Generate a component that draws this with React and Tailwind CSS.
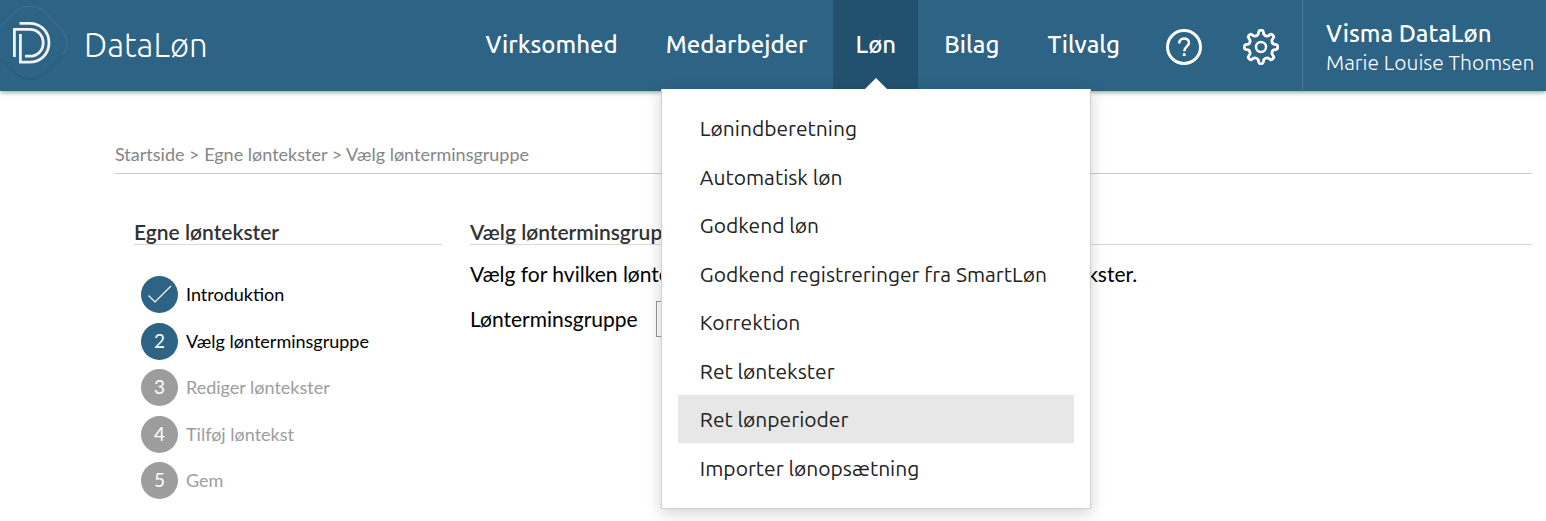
const navItems = ["Virksomhed", "Medarbejder", "Løn", "Bilag", "Tilvalg"];

const menuItems = [
  "Lønindberetning",
  "Automatisk løn",
  "Godkend løn",
  "Godkend registreringer fra SmartLøn",
  "Korrektion",
  "Ret løntekster",
  "Ret lønperioder",
  "Importer lønopsætning",
];

const steps = [
  { label: "Introduktion", state: "done" },
  { label: "Vælg lønterminsgruppe", state: "current" },
  { label: "Rediger løntekster", state: "todo" },
  { label: "Tilføj løntekst", state: "todo" },
  { label: "Gem", state: "todo" },
];

const crumbs = ["Startside", "Egne løntekster", "Vælg lønterminsgruppe"];

function Logo() {
  return (
    <svg viewBox="0 0 75 91" className="h-[91px] w-[75px] shrink-0" fill="none" aria-hidden="true">
      <path d="M-4 31L17 10Q30 2 43 10L63 31Q71 43 63 55" stroke="#3d7396" strokeWidth="1" />
      <path d="M63 55L43 75Q30 84 17 75L-4 55" stroke="#26567a" strokeWidth="1" />
      <g stroke="#f0f2f4" strokeWidth="2.8">
        <path d="M19.500 23.400H29.500C40.500 23.400 49 31.500 49 42.800S40.500 62.200 29.500 62.200H20.400V34" />
        <path d="M14.400 57V29.400H29.500C37.500 29.400 43.200 35 43.200 42.800S37.500 56.200 29.500 56.200H25" />
      </g>
    </svg>
  );
}

function HelpIcon() {
  return (
    <svg viewBox="0 0 38 38" className="size-[38px]" fill="none" stroke="#fff" strokeWidth="3" aria-hidden="true">
      <circle cx="19" cy="19" r="16.500" />
      <path d="M14.200 15.500C14.200 8.800 24 9.200 24 14.800C24 18.300 19.200 18.500 19.200 23.300" strokeWidth="2.500" />
      <path d="M19.200 25.300V28" strokeWidth="2.700" />
    </svg>
  );
}

function gearPath() {
  const points = [];
  for (let i = 0; i < 8; i++) {
    const a = (i * Math.PI) / 4;
    const at = (x, y) =>
      `${(19 + x * Math.cos(a) - y * Math.sin(a)).toFixed(2)} ${(19 + x * Math.sin(a) + y * Math.cos(a)).toFixed(2)}`;
    points.push(
      `${i ? "L" : "M"}${at(-2.8, -12.8)}L${at(-2.3, -15.3)}Q${at(-2, -16.6)} ${at(-1, -16.6)}L${at(1, -16.6)}Q${at(2, -16.6)} ${at(2.3, -15.3)}L${at(2.8, -12.8)}Q${at(4.2, -10.4)} ${at(7.07, -11.03)}`
    );
  }
  return points.join("") + "Z";
}

function GearIcon() {
  return (
    <svg viewBox="0 0 38 38" className="size-[38px]" fill="none" stroke="#fff" strokeWidth="2.800" strokeLinejoin="round" aria-hidden="true">
      <path d={gearPath()} />
      <circle cx="19" cy="19" r="5" strokeWidth="2.400" />
    </svg>
  );
}

function LonMenu() {
  return (
    <div className="absolute top-[89px] left-1/2 z-10 w-[430px] -translate-x-1/2 border border-t-0 border-[#cfcfcf] bg-white px-4 pt-[15px] pb-4 shadow-[0_4px_14px_rgba(0,0,0,0.18)]">
      <svg viewBox="0 0 22 11" className="absolute -top-[11px] left-1/2 h-[11px] w-[22px] -translate-x-1/2" aria-hidden="true">
        <path d="M0 11L11 0L22 11Z" fill="#fff" />
      </svg>
      <ul className="flex min-h-[388px] flex-col justify-between">
        {menuItems.map((item) => (
          <li key={item}>
            <a
              href="#"
              className={`block px-[22px] text-[21px] leading-[48px] whitespace-nowrap text-[#222] ${
                item === "Ret lønperioder" ? "bg-[#e7e7e7]" : ""
              }`}
            >
              {item}
            </a>
          </li>
        ))}
      </ul>
    </div>
  );
}

function Header() {
  return (
    <header className="relative z-10 flex h-[91px] items-stretch bg-[#2d6385] font-[Ubuntu,'Noto_Sans',sans-serif] text-white shadow-[0_1px_5px_rgba(0,0,0,0.45)]">
      <a href="#" className="flex items-center">
        <Logo />
        <span className="pb-[2px] pl-[9px] text-[33px] font-light">DataLøn</span>
      </a>
      <nav className="ml-auto flex">
        <ul className="flex gap-1">
          {navItems.map((item) => (
            <li key={item} className={`relative ${item === "Løn" ? "bg-[#22516f]" : ""}`}>
              <a href="#" className="flex h-full items-center px-[22px] pb-[2px] text-[24px] font-medium">
                {item}
              </a>
              {item === "Løn" && <LonMenu />}
            </li>
          ))}
        </ul>
      </nav>
      <div className="flex items-center gap-[39px] pt-[3px] pr-[22px] pl-[23px]">
        <button type="button" aria-label="Hjælp"><HelpIcon /></button>
        <button type="button" aria-label="Indstillinger"><GearIcon /></button>
      </div>
      <div className="flex w-[244px] flex-col justify-center border-l border-[#4a7997] pt-[4px] pl-[23px] whitespace-nowrap">
        <span className="text-[24px] leading-7 font-medium">Visma DataLøn</span>
        <span className="text-[21px] leading-7 font-light">Marie Louise Thomsen</span>
      </div>
    </header>
  );
}

function Steps() {
  return (
    <ol className="mt-[31px] ml-[7px] flex min-h-[223px] flex-col justify-between text-[18px]">
      {steps.map((step, i) => (
        <li key={step.label} className="flex items-center gap-2">
          <span
            className={`flex size-[37px] shrink-0 items-center justify-center rounded-full text-[19px] text-white ${
              step.state === "todo" ? "bg-[#9d9d9d]" : "bg-[#2d6385]"
            }`}
          >
            {step.state === "done" ? (
              <svg viewBox="0 0 37 37" className="size-[37px]" fill="none" stroke="#fff" strokeWidth="1.200" aria-hidden="true">
                <path d="M7.500 19.500L14 26L30 10" />
              </svg>
            ) : (
              i + 1
            )}
          </span>
          <span className={step.state === "todo" ? "text-[#9d9d9d]" : "text-black"}>{step.label}</span>
        </li>
      ))}
    </ol>
  );
}

export default function App() {
  return (
    <div className="min-h-screen bg-white font-[Lato,sans-serif]">
      <Header />
      <main className="pt-[51px] pr-[14px] pl-[115px]">
        <nav aria-label="Brødkrumme" className="border-b border-[#c8cac8] pb-[7px] text-[18px] leading-6 text-[#858585]">
          {crumbs.map((crumb, i) => (
            <span key={crumb}>
              {i > 0 && " > "}
              <a href="#">{crumb}</a>
            </span>
          ))}
        </nav>
        <div className="flex gap-7 pt-[46px] pl-[19px]">
          <section className="w-[308px] shrink-0">
            <h2 className="border-b border-[#d9d9d9] text-[21px] leading-6 font-semibold text-[#333]">Egne løntekster</h2>
            <Steps />
          </section>
          <section className="min-w-0 grow text-[21px] text-black">
            <h2 className="border-b border-[#d9d9d9] leading-6 font-semibold text-[#333]">Vælg lønterminsgruppe</h2>
            <p className="mt-[13px] leading-8 whitespace-nowrap">
              Vælg for hvilken lønterminsgruppe du ønsker at redigere egne løntekster.
            </p>
            <div className="mt-[11px] flex items-center gap-[18px]">
              <label htmlFor="gruppe">Lønterminsgruppe</label>
              <select id="gruppe" className="h-9 w-[320px] border border-[#999] bg-white px-2">
                <option></option>
              </select>
            </div>
          </section>
        </div>
      </main>
    </div>
  );
}
